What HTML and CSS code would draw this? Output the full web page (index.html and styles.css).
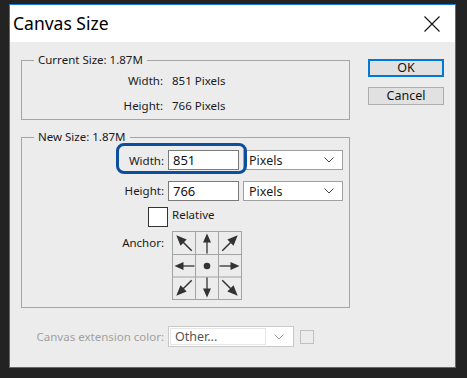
FILE: index.html
```html
<!DOCTYPE html>
<html lang="en">
<head>
  <meta charset="UTF-8">
  <title>Canvas Size</title>
  <link rel="stylesheet" href="styles.css">
</head>
<body>
  <div class="dialog">
    <div class="titlebar">
      <span class="title">Canvas Size</span>
      <svg class="close" width="16" height="16" viewBox="0 0 16 16">
        <path d="M0.5 0.5 L15.5 15.5 M15.5 0.5 L0.5 15.5" stroke="#111" stroke-width="1.1" fill="none"/>
      </svg>
    </div>
    <div class="content">
      <div class="main">
        <fieldset class="group current">
          <legend>Current Size: 1.87M</legend>
          <div class="info">
            <span class="lbl">Width:</span><span>851 Pixels</span>
            <span class="lbl">Height:</span><span>766 Pixels</span>
          </div>
        </fieldset>

        <fieldset class="group newsize">
          <legend>New Size: 1.87M</legend>
          <div class="form">
            <span class="focus-ring"></span>
            <span class="lbl">Width:</span>
            <input class="num" type="text" value="851">
            <div class="select"><span>Pixels</span><svg width="10" height="6" viewBox="0 0 10 6"><path d="M0.5 0.5 L5 5 L9.5 0.5" stroke="#444" fill="none"/></svg></div>

            <span class="lbl">Height:</span>
            <input class="num" type="text" value="766">
            <div class="select"><span>Pixels</span><svg width="10" height="6" viewBox="0 0 10 6"><path d="M0.5 0.5 L5 5 L9.5 0.5" stroke="#444" fill="none"/></svg></div>

            <span class="check"></span>
            <span class="check-text">Relative</span>

            <span class="lbl anchor-lbl">Anchor:</span>
            <svg class="anchor" width="70" height="70" viewBox="0 0 70 70">
              <g stroke="#a3a3a3" stroke-width="1" fill="none">
                <rect x="0.5" y="0.5" width="69" height="68"/>
                <path d="M23.5 0 V69 M46.5 0 V69 M0 23.5 H70 M0 46 H70"/>
              </g>
              <g fill="#333" stroke="#333" stroke-width="1.3">
                <g transform="translate(12 12) rotate(-45) scale(1.15)"><path d="M0 9.5 V-1" /><path d="M-3.8 -0.5 L3.8 -0.5 L0 -9.5 Z" stroke="none"/></g>
                <g transform="translate(35 12)"><path d="M0 10.5 V-1" /><path d="M-4 -0.5 L4 -0.5 L0 -9.5 Z" stroke="none"/></g>
                <g transform="translate(58 12) rotate(45) scale(1.15)"><path d="M0 9.5 V-1" /><path d="M-3.8 -0.5 L3.8 -0.5 L0 -9.5 Z" stroke="none"/></g>
                <g transform="translate(12 35) rotate(-90)"><path d="M0 10.5 V-1" /><path d="M-4 -0.5 L4 -0.5 L0 -9.5 Z" stroke="none"/></g>
                <circle cx="35" cy="35" r="3.3" stroke="none"/>
                <g transform="translate(58 35) rotate(90)"><path d="M0 10.5 V-1" /><path d="M-4 -0.5 L4 -0.5 L0 -9.5 Z" stroke="none"/></g>
                <g transform="translate(12 57) rotate(-135) scale(1.15)"><path d="M0 9.5 V-1" /><path d="M-3.8 -0.5 L3.8 -0.5 L0 -9.5 Z" stroke="none"/></g>
                <g transform="translate(35 57) rotate(180)"><path d="M0 10.5 V-1" /><path d="M-4 -0.5 L4 -0.5 L0 -9.5 Z" stroke="none"/></g>
                <g transform="translate(58 57) rotate(135) scale(1.15)"><path d="M0 9.5 V-1" /><path d="M-3.8 -0.5 L3.8 -0.5 L0 -9.5 Z" stroke="none"/></g>
              </g>
            </svg>
          </div>
        </fieldset>

        <div class="extension">
          <span class="ext-lbl">Canvas extension color:</span>
          <div class="ext-select">
            <span class="ext-value">Other...</span>
            <span class="ext-arrow"><svg width="10" height="6" viewBox="0 0 10 6"><path d="M0.5 0.5 L5 5 L9.5 0.5" stroke="#9a9a9a" fill="none"/></svg></span>
          </div>
          <span class="swatch"></span>
        </div>
      </div>

      <div class="buttons">
        <button class="btn default">OK</button>
        <button class="btn">Cancel</button>
      </div>
    </div>
  </div>
</body>
</html>
```

FILE: styles.css
```css
body {
  margin: 0;
  background: #232323;
  font-family: "Noto Sans", "Liberation Sans", sans-serif;
  font-size: 11.5px;
  color: #1a1a1a;
}

.dialog {
  margin: 4px 0 0 9px;
  width: 447px;
  height: 364px;
  box-sizing: border-box;
  border: 1px solid #1c7bcc;
  display: flex;
  flex-direction: column;
}

.titlebar {
  height: 37px;
  background: #fff;
  display: flex;
  align-items: center;
  justify-content: space-between;
  padding: 0 15px 0 3px;
}

.title {
  font-size: 17.5px;
  color: #000;
  margin-top: -1px;
}

.close {
  margin-top: 1px;
}

.content {
  flex: 1;
  background: #ececec;
  display: flex;
  padding: 10px 0 0 11px;
}

.main {
  width: 329px;
}

.group {
  margin: 0;
  padding: 0;
  border: 1px solid #a5a5a5;
  min-width: 0;
}

.group legend {
  margin-left: 12px;
  padding: 0 4px;
  line-height: 16px;
}

.info {
  display: grid;
  grid-template-columns: 141px auto;
  column-gap: 9px;
  grid-auto-rows: 25px;
  align-items: center;
  padding-bottom: 1px;
}

.lbl {
  text-align: right;
}

.newsize {
  margin-top: 9px;
}

.form {
  position: relative;
  display: grid;
  grid-template-columns: 142px 71px 100px;
  grid-template-rows: 20px 31px 26px 74px;
  column-gap: 4px;
  align-items: end;
  padding: 5px 0 6px;
}

.focus-ring {
  position: absolute;
  left: 94px;
  top: -2px;
  width: 131px;
  height: 31px;
  box-sizing: border-box;
  border: 3px solid #0b4f9e;
  border-radius: 8px;
}

.form .lbl {
  align-self: center;
}

.form .lbl:nth-of-type(n+3) {
  transform: translateY(5px);
}

.num {
  box-sizing: border-box;
  width: 71px;
  height: 20px;
  border: 1px solid #7a7a7a;
  background: #fff;
  padding: 0 4px;
  font: inherit;
  font-size: 13px;
  color: #111;
}

.select {
  box-sizing: border-box;
  height: 20px;
  border: 1px solid #a0a0a0;
  background: #fff;
  display: flex;
  align-items: center;
  justify-content: space-between;
  padding: 0 8px 0 5px;
  font-size: 12.5px;
}

.check {
  justify-self: end;
  margin-right: -4px;
  width: 20px;
  height: 20px;
  box-sizing: border-box;
  border: 1px solid #333;
  background: #fff;
}

.check-text {
  grid-column: span 2;
  margin-left: 4px;
  align-self: start;
  margin-top: 6px;
  line-height: 16px;
}

.form .anchor-lbl {
  align-self: start;
  margin-top: 3px;
  transform: none;
}

.anchor {
  display: block;
  margin-left: 4px;
  grid-column: span 2;
}

.extension {
  display: grid;
  grid-template-columns: 147px 126px auto;
  align-items: center;
  margin-top: 18px;
}

.ext-lbl {
  text-align: right;
  padding-right: 4px;
  color: #a0a0a0;
}

.ext-select {
  box-sizing: border-box;
  height: 21px;
  border: 1px solid #c9c9c9;
  background: #fff;
  display: flex;
  padding: 1px;
}

.ext-value {
  flex: 1;
  border: 1px solid #e6e6e6;
  color: #555;
  font-size: 12.5px;
  line-height: 15px;
  padding-left: 4px;
}

.ext-arrow {
  width: 26px;
  display: flex;
  align-items: center;
  justify-content: center;
}

.swatch {
  margin-left: 6px;
  width: 14px;
  height: 14px;
  box-sizing: border-box;
  border: 1px solid #c0c0c0;
}

.buttons {
  margin: 7px 0 0 18px;
  display: flex;
  flex-direction: column;
  gap: 10px;
}

.btn {
  width: 76px;
  height: 18px;
  box-sizing: border-box;
  border: 1px solid #adadad;
  background: #e1e1e1;
  font: inherit;
  font-size: 12.5px;
  line-height: 14px;
  padding: 0;
  color: #111;
}

.btn.default {
  border: 2px solid #0078d7;
}
```
